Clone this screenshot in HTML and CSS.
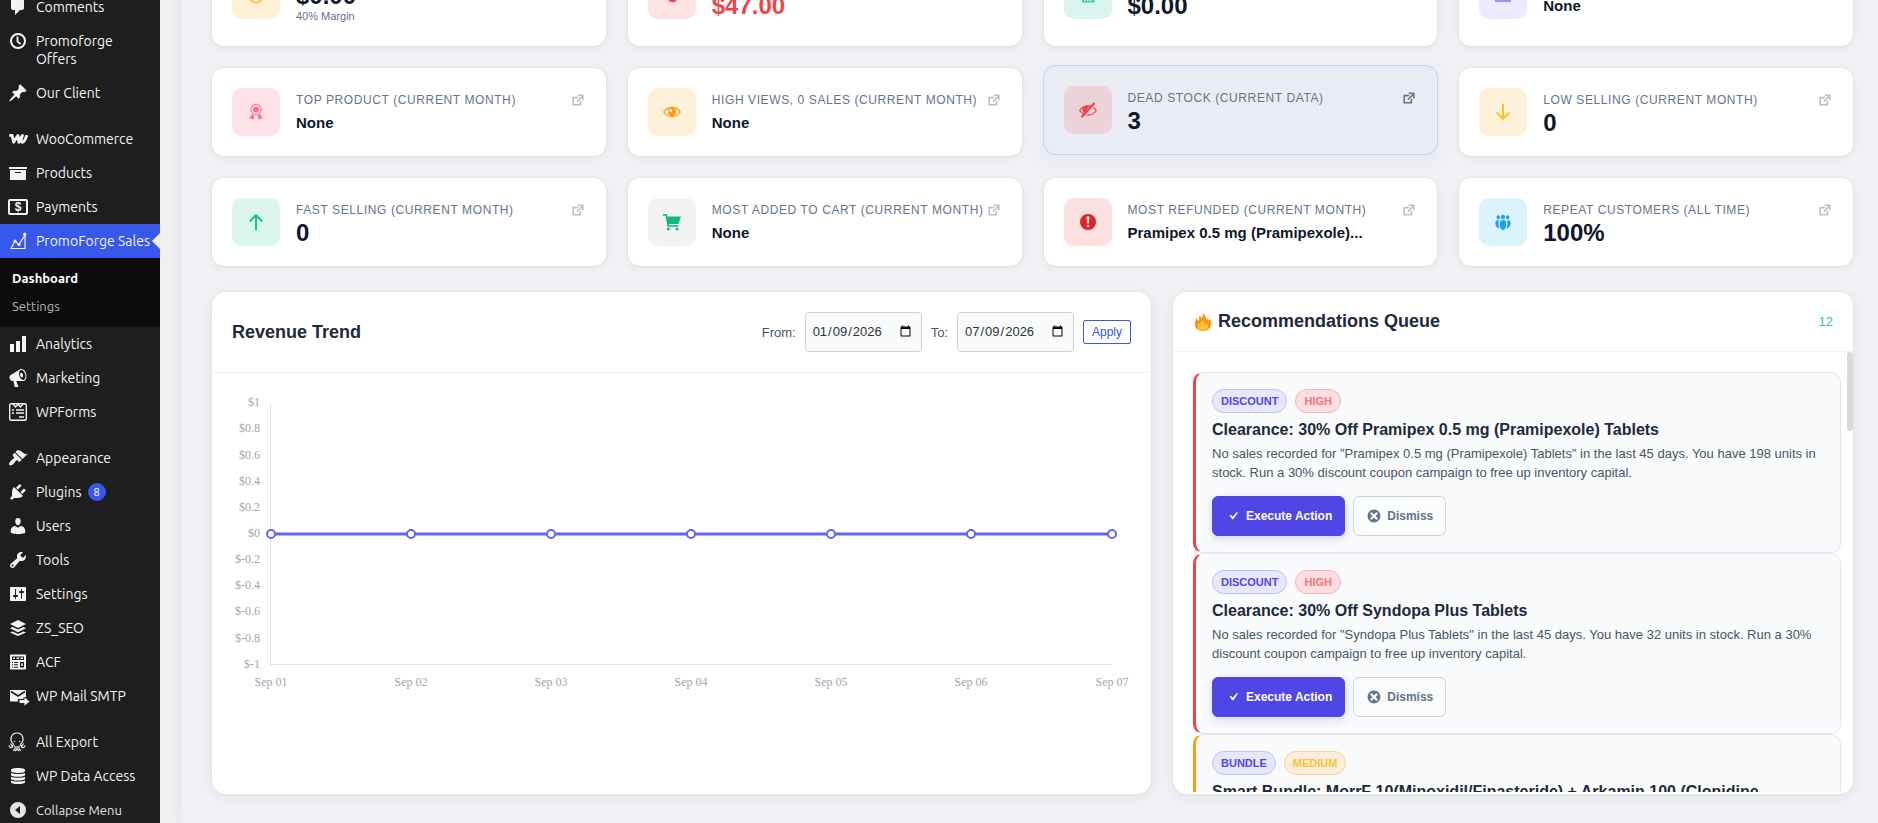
FILE: index.html
```html
<!DOCTYPE html>
<html lang="en">
<head>
  <meta charset="UTF-8" />
  <meta name="viewport" content="width=device-width, initial-scale=1" />
  <title>PromoForge Sales Dashboard</title>
  <link rel="stylesheet" href="styles.css">
</head>
<body>
  <!-- shared icons -->
  <svg class="sprite" aria-hidden="true">
    <symbol id="external" viewBox="0 0 20 20"><path d="M9 3h8v8l-2-1V6.92l-5.6 5.59-1.41-1.41L14.08 5H10zm3 12v-3l2-2v7H3V6h8L9 8H5v7h7z"/></symbol>
    <symbol id="check" viewBox="0 0 20 20"><path d="M14.83 4.89l1.34.94-5.81 8.38H9.02L5.78 9.67l1.34-1.25 2.57 2.4z"/></symbol>
    <symbol id="dismiss" viewBox="0 0 20 20"><path d="M10 2c4.42 0 8 3.58 8 8s-3.58 8-8 8-8-3.58-8-8 3.58-8 8-8zm5 11l-3-3 3-3-2-2-3 3-3-3-2 2 3 3-3 3 2 2 3-3 3 3z"/></symbol>
  </svg>

  <div class="layout">
    <nav class="sidebar" aria-label="Main menu">
      <ul class="menu">
        <li><a href="#"><svg viewBox="0 0 20 20"><path d="M5 2h9c1.1 0 2 .9 2 2v7c0 1.1-.9 2-2 2h-2l-5 5v-5H5c-1.1 0-2-.9-2-2V4c0-1.1.9-2 2-2z"/></svg><span>Comments</span></a></li>
        <li><a href="#"><svg viewBox="0 0 20 20"><circle cx="10" cy="10" r="7" fill="none" stroke="currentColor" stroke-width="2"/><path d="M9.5 5.5v5l3 2.5" fill="none" stroke="currentColor" stroke-width="1.8"/></svg><span>Promoforge Offers</span></a></li>
        <li><a href="#"><svg viewBox="0 0 20 20"><path d="M10.44 3.02l1.82-1.82 6.36 6.35-1.83 1.82c-1.05-.68-2.48-.57-3.41.36l-.75.75c-.92.93-1.04 2.35-.35 3.41l-1.83 1.82-2.41-2.41-2.8 2.79c-.42.42-3.38 2.71-3.8 2.29s1.86-3.39 2.28-3.81l2.79-2.79L4.1 9.36l1.83-1.82c1.05.69 2.48.57 3.4-.36l.75-.75c.93-.92 1.05-2.35.36-3.41z"/></svg><span>Our Client</span></a></li>
        <li class="gap"></li>
        <li><a href="#"><svg viewBox="0 0 20 20"><path d="M1.2 6.4h2.9l1.5 6.800 4.300-6.700 1 6.700c1-3.200 2-5.200 3.600-6.700-1.800 3.600-1.700 6.700-.2 6.700 1.800 0 3.200-3.200 4.500-7" fill="none" stroke="currentColor" stroke-width="2.900" stroke-linejoin="round"/></svg><span>WooCommerce</span></a></li>
        <li><a href="#"><svg viewBox="0 0 20 20"><path d="M19 4v2H1V4h18zM2 7h16v10H2V7zm11 3V9H7v1h6z"/></svg><span>Products</span></a></li>
        <li><a href="#"><svg viewBox="0 0 20 20"><rect x="1" y="3" width="18" height="14" rx="1" fill="none" stroke="currentColor" stroke-width="2"/><text x="10" y="14" class="glyph" text-anchor="middle">$</text></svg><span>Payments</span></a></li>
        <li class="current"><a href="#"><svg viewBox="0 0 20 20"><path d="M3 17.5L7 10l4 3.5L17 4v13.5z" fill="none" stroke="currentColor" stroke-width="1.2"/><circle cx="7" cy="10" r="1.5"/><circle cx="11" cy="13.5" r="1.5"/><circle cx="16.7" cy="3.2" r="1.6"/></svg><span>PromoForge Sales</span></a>
          <ul class="submenu">
            <li><a class="here" href="#">Dashboard</a></li>
            <li><a href="#">Settings</a></li>
          </ul>
        </li>
        <li><a href="#"><svg viewBox="0 0 20 20"><path d="M18 18V2h-4v16h4zm-6 0V7H8v11h4zM2 18h4v-8H2v8z"/></svg><span>Analytics</span></a></li>
        <li><a href="#"><svg viewBox="0 0 20 20"><path d="M18.15 5.94c.46 1.62.38 3.22-.02 4.48-.42 1.28-1.26 2.18-2.3 2.48-.16.06-.26.06-.4.06-.06.02-.12.02-.18.02-.06.02-.14.02-.22.02h-6.8l2.22 5.5c.02.14-.06.26-.14.34-.08.1-.24.16-.34.16H6.95c-.1 0-.26-.06-.34-.16-.08-.08-.16-.2-.14-.34l-1-5.5H4.25l-.02-.02c-.5.06-1.08-.18-1.54-.62s-.88-1.08-1.06-1.88c-.24-.8-.2-1.56-.02-2.2.18-.62.58-1.08 1.06-1.3l.02-.02 9-5.4c.1-.06.18-.1.24-.16.06-.04.14-.08.24-.12.16-.08.28-.12.5-.18 1.04-.3 2.24.1 3.22.98s1.84 2.24 2.26 3.86zm-2.58 5.98h-.02c.4-.1.74-.34 1.04-.7.58-.7.86-1.76.86-3.04 0-.64-.1-1.3-.28-1.98-.34-1.36-1.02-2.5-1.78-3.24s-1.68-1.1-2.46-.88c-.82.22-1.4.96-1.7 2-.32 1.04-.28 2.36.06 3.72.38 1.36 1 2.5 1.8 3.24.78.74 1.62 1.1 2.48.88zm-2.54-7.08c.22-.04.42-.02.62.04.38.16.76.48 1.02 1s.42 1.2.42 1.78c0 .3-.04.56-.12.8-.18.48-.44.84-.86.94-.34.1-.8-.06-1.14-.4s-.64-.86-.78-1.5c-.18-.62-.12-1.24.02-1.72s.48-.84.82-.94z"/></svg><span>Marketing</span></a></li>
        <li><a href="#"><svg viewBox="0 0 20 20" fill="none" stroke="currentColor"><rect x="1.7" y="1.7" width="16.6" height="16.6" rx="1.5" stroke-width="1.4"/><path d="M5 2l2.5 3L10 2.5 12.5 5 15 2M4 8h2m2 0h8M4 11h2m2 0h8M11 15h5" stroke-width="1.4"/></svg><span>WPForms</span></a></li>
        <li class="gap"></li>
        <li><a href="#"><svg viewBox="0 0 20 20"><path d="M14.48 11.06L7.41 3.99l1.5-1.5c.5-.56 2.3-.47 3.51.32 1.21.8 1.43 1.28 2.91 2.1 1.18.64 2.45 1.26 4.45.85zm-.71.71L6.7 4.7 4.93 6.47c-.39.39-.39 1.02 0 1.41l1.06 1.06c.39.39.39 1.03 0 1.42-.6.6-1.43 1.11-2.21 1.69-.35.26-.7.53-1.01.84C1.43 14.23.4 16.08 1.4 17.07c.99 1 2.84-.03 4.18-1.36.31-.31.58-.66.85-1.02.57-.78 1.08-1.61 1.69-2.21.39-.39 1.02-.39 1.41 0l1.06 1.06c.39.39 1.02.39 1.41 0z"/></svg><span>Appearance</span></a></li>
        <li><a href="#"><svg viewBox="0 0 20 20"><path d="M13.11 4.36L9.87 7.6 8 5.73l3.24-3.24c.35-.34 1.05-.2 1.56.32.52.51.66 1.21.31 1.55zm-8 1.77l.91-1.12 9.01 9.01-1.19.84c-.71.71-2.63 1.16-3.82 1.16H6.14L4.9 17.26c-.59.59-1.54.59-2.12 0-.59-.58-.59-1.53 0-2.12l1.24-1.24v-3.88c0-1.13.4-3.19 1.09-3.89zm7.26 3.97l3.24-3.24c.34-.35 1.04-.21 1.55.31.52.51.66 1.21.31 1.55l-3.24 3.25z"/></svg><span>Plugins</span><span class="count">8</span></a></li>
        <li><a href="#"><svg viewBox="0 0 20 20"><path d="M10 9.25c-2.27 0-2.73-3.44-2.73-3.44C7 4.02 7.82 2 9.97 2c2.16 0 2.98 2.02 2.71 3.81 0 0-.41 3.44-2.68 3.44zm0 2.57L12.72 10c2.39 0 4.52 2.33 4.52 4.53v2.49s-3.65 1.13-7.24 1.13c-3.65 0-7.24-1.13-7.24-1.13v-2.49c0-2.25 1.94-4.48 4.47-4.48z"/></svg><span>Users</span></a></li>
        <li><a href="#"><svg viewBox="0 0 20 20"><path d="M16.68 9.77c-1.34 1.34-3.3 1.67-4.95.99l-5.41 6.52c-.99.99-2.59.99-3.58 0s-.99-2.59 0-3.57l6.52-5.42c-.68-1.65-.35-3.61.99-4.95 1.28-1.28 3.12-1.62 4.72-1.06l-2.89 2.89 2.82 2.82 2.86-2.87c.53 1.58.18 3.39-1.08 4.65zM3.81 16.21c.4.39 1.04.39 1.43 0 .4-.4.4-1.04 0-1.43-.39-.4-1.03-.4-1.43 0-.39.39-.39 1.03 0 1.43z"/></svg><span>Tools</span></a></li>
        <li><a href="#"><svg viewBox="0 0 20 20"><path fill-rule="evenodd" d="M18 16V4c0-.55-.45-1-1-1H3c-.55 0-1 .45-1 1v12c0 .55.45 1 1 1h14c.55 0 1-.45 1-1zM8 11h1c.55 0 1 .45 1 1s-.45 1-1 1H8v1.5c0 .28-.22.5-.5.5s-.5-.22-.5-.5V13H6c-.55 0-1-.45-1-1s.45-1 1-1h1V5.5c0-.28.22-.5.5-.5s.5.22.5.5V11zm5-2h-1c-.55 0-1-.45-1-1s.45-1 1-1h1V5.5c0-.28.22-.5.5-.5s.5.22.5.5V7h1c.55 0 1 .45 1 1s-.45 1-1 1h-1v5.5c0 .28-.22.5-.5.5s-.5-.22-.5-.5V9z"/></svg><span>Settings</span></a></li>
        <li><a href="#"><svg viewBox="0 0 20 20"><path d="M10 2l8 4-8 4-8-4zM4.5 9L10 11.5 15.5 9l2.5 1.2-8 4-8-4zM4.5 13.500L10 16l5.5-2.500 2.500 1-8 3.500-8-3.500z"/></svg><span>ZS_SEO</span></a></li>
        <li><a href="#"><svg viewBox="0 0 20 20"><path fill-rule="evenodd" d="M3 2.5h14c.6 0 1 .4 1 1v13c0 .6-.4 1-1 1H3c-.6 0-1-.4-1-1v-13c0-.6.4-1 1-1zM4 4.500V8h12V4.500zm1 1h2V7H5zm3.500 0h2.700V7H8.500zm4 0H15V7h-2.500zM4 10v1h1v-1zm2 0v1h4v-1zm-2 2.300v1h1v-1zm2 0v1h4v-1zM4 14.700v1h1v-1zm2 0v1h4v-1zM12 10v5.500h4V10zm1.300 1.300h1.500v2.700h-1.500z"/></svg><span>ACF</span></a></li>
        <li><a href="#"><svg viewBox="0 0 22 20" class="wide"><path d="M3 4h14c.6 0 1 .4 1 1v6h-2.500v2H10v2.500H3c-.6 0-1-.4-1-1V5c0-.6.4-1 1-1z"/><path d="M3 5.500l7 4.500 7-4.500" fill="none" stroke="#1e1e1e" stroke-width="1.6"/><path d="M11.500 14h5v-2.800l5 4.300-5 4.300V17h-5z"/></svg><span>WP Mail SMTP</span></a></li>
        <li class="gap"></li>
        <li><a href="#"><svg viewBox="0 0 20 20" fill="none" stroke="currentColor" stroke-width="1.2"><path d="M5.500 12C3 10 2.600 7 3.300 5 4.300 2.300 6.500 1 9 1s4.800 1.300 5.700 4c.7 2 .3 5-2.200 7"/><path d="M5.500 12l-1 3c-1 1.500-3.500.5-3.500-1.500M4.500 15l-2-3.500M12.500 12l1 3c1 1.500 3.500.5 3.500-1.500M13.500 15l2-3.500M6.500 13.500c1.500 2 .5 4.500-1.500 5M11.500 13.500c-1.500 2-.5 4.500 1.500 5M9 14v3M7 19l2-2 2 2"/><path d="M6 9.500h1.200M11 9.500h1.200"/></svg><span>All Export</span></a></li>
        <li><a href="#"><svg viewBox="0 0 20 20"><path d="M3 4c0-1.2 3-2 7-2s7 .8 7 2v1c0 1.2-3 2-7 2s-7-.8-7-2zM3 7c2 1.300 12 1.300 14 0v2c0 1-3 1.800-7 1.800S3 10 3 9zM3 10.800c2 1.300 12 1.300 14 0v2c0 1-3 1.800-7 1.800s-7-.8-7-1.800zM3 14.600c2 1.300 12 1.300 14 0v1.600c0 1-3 1.800-7 1.800s-7-.8-7-1.800z"/></svg><span>WP Data Access</span></a></li>
        <li><button type="button" class="collapse"><svg viewBox="0 0 20 20"><path fill-rule="evenodd" d="M10 2a8 8 0 100 16 8 8 0 000-16zm2 12V6l-5 4z"/></svg><span>Collapse Menu</span></button></li>
      </ul>
    </nav>

    <main class="content">
      <section class="stats">
        <article class="stat">
          <div class="icon amber"><svg viewBox="0 0 20 20" fill="none" stroke="#ffb52e" stroke-width="1.5"><circle cx="10" cy="10" r="7.5"/><path d="M12.500 7.500c-3-2-5 0-2.500 2.500s0 4-2.500 2.500"/></svg></div>
          <div class="info">
            <div class="label">Net Profit (Current Month)</div>
            <div class="value">$0.00</div>
            <div class="note">40% Margin</div>
          </div>
        </article>
        <article class="stat">
          <div class="icon red"><svg viewBox="0 0 20 20"><path d="M2 4h16v10h-3c-1 4-5 4-8 2L6 12H2z"/></svg></div>
          <div class="info">
            <div class="label">Refunds (Current Month)</div>
            <div class="value loss">$47.00</div>
          </div>
        </article>
        <article class="stat">
          <div class="icon teal"><svg viewBox="0 0 20 20"><path fill-rule="evenodd" d="M4 3h12.500v14.500H4zM6 12v4h1.500v-4zm3 0v4h1.500v-4zm3 0v4h1.500v-4z"/></svg></div>
          <div class="info">
            <div class="label">Average Order (Current Month)</div>
            <div class="value">$0.00</div>
          </div>
        </article>
        <article class="stat">
          <div class="icon violet"><svg viewBox="0 0 20 20"><path d="M2 5h16v12H2z"/></svg></div>
          <div class="info">
            <div class="label">Top Category (Current Month)</div>
            <div class="value text">None</div>
          </div>
        </article>

        <article class="stat">
          <div class="icon rose"><svg viewBox="0 0 20 20"><circle cx="10" cy="7.5" r="3"/><circle cx="10" cy="7.5" r="5" fill="none" stroke="currentColor" stroke-width="1.3" stroke-dasharray="2 .6"/><path d="M6 12l2.500 1.700L7 18l-1.300-1.500L3 17zM14 12l-2.500 1.700L13 18l1.300-1.500L17 17z"/></svg></div>
          <div class="info">
            <div class="label"><span>Top Product (Current Month)</span><a href="#" aria-label="Open top product"><svg><use href="#external"/></svg></a></div>
            <div class="value text">None</div>
          </div>
        </article>
        <article class="stat">
          <div class="icon orange"><svg viewBox="0 0 20 20"><path d="M1.700 10c4-6 12.600-6 16.600 0-4 6-12.600 6-16.600 0z" fill="none" stroke="currentColor" stroke-width="1.3"/><path fill-rule="evenodd" d="M10 6a4 4 0 100 8 4 4 0 000-8zM8.800 7.200a1.500 1.500 0 110 3 1.500 1.500 0 010-3z"/></svg></div>
          <div class="info">
            <div class="label"><span>High Views, 0 Sales (Current Month)</span><a href="#" aria-label="Open high views"><svg><use href="#external"/></svg></a></div>
            <div class="value text">None</div>
          </div>
        </article>
        <article class="stat active">
          <div class="icon red"><svg viewBox="0 0 20 20"><path d="M1.700 10.500c4-6 12.600-6 16.600 0-4 6-12.600 6-16.600 0z" fill="none" stroke="currentColor" stroke-width="1.3"/><path d="M11 6.200a4.200 4.200 0 00-4.500 7.300z"/><path d="M17.500 4L5 18" stroke="#edd2da" stroke-width="1.5"/><path d="M16.500 3L3.500 17.300" stroke="currentColor" stroke-width="2.2"/></svg></div>
          <div class="info">
            <div class="label"><span>Dead Stock (Current Data)</span><a href="#" aria-label="Open dead stock"><svg><use href="#external"/></svg></a></div>
            <div class="value">3</div>
          </div>
        </article>
        <article class="stat">
          <div class="icon yellow"><svg viewBox="0 0 20 20" fill="none" stroke="currentColor" stroke-width="2"><path d="M10 2v15M3.700 10.500l6.300 6.300 6.300-6.300"/></svg></div>
          <div class="info">
            <div class="label"><span>Low Selling (Current Month)</span><a href="#" aria-label="Open low selling"><svg><use href="#external"/></svg></a></div>
            <div class="value">0</div>
          </div>
        </article>

        <article class="stat">
          <div class="icon green"><svg viewBox="0 0 20 20" fill="none" stroke="currentColor" stroke-width="2"><path d="M10 18V3M3.700 9.500L10 3.200l6.300 6.300"/></svg></div>
          <div class="info">
            <div class="label"><span>Fast Selling (Current Month)</span><a href="#" aria-label="Open fast selling"><svg><use href="#external"/></svg></a></div>
            <div class="value">0</div>
          </div>
        </article>
        <article class="stat">
          <div class="icon grey"><svg viewBox="0 0 20 20"><path d="M1 2h3.800l.6 2.500H19L16.500 12H6.800l.2 1.200h9.500v1.500H5.500L3.600 3.800H1z"/><circle cx="6.300" cy="17" r="1.5"/><circle cx="15" cy="17" r="1.5"/></svg></div>
          <div class="info">
            <div class="label"><span>Most Added To Cart (Current Month)</span><a href="#" aria-label="Open most added to cart"><svg><use href="#external"/></svg></a></div>
            <div class="value text">None</div>
          </div>
        </article>
        <article class="stat">
          <div class="icon crimson"><svg viewBox="0 0 20 20"><path fill-rule="evenodd" d="M10 2a8 8 0 100 16 8 8 0 000-16zM8.500 4.500h3l-.5 7H9zM10 12.700a1.400 1.400 0 110 2.800 1.400 1.400 0 010-2.800z"/></svg></div>
          <div class="info">
            <div class="label"><span>Most Refunded (Current Month)</span><a href="#" aria-label="Open most refunded"><svg><use href="#external"/></svg></a></div>
            <div class="value text">Pramipex 0.5 mg (Pramipexole)...</div>
          </div>
        </article>
        <article class="stat">
          <div class="icon sky"><svg viewBox="0 0 20 20"><circle cx="10" cy="5" r="2.2"/><ellipse cx="5.300" cy="5.300" rx="1.7" ry="2"/><ellipse cx="14.700" cy="5.300" rx="1.7" ry="2"/><path d="M10 8c2.500 0 3.200 1.600 3.200 4.500S12 18 10 18s-3.200-2.600-3.200-5.500S7.500 8 10 8zM6 8c-.8 2.500-.7 6 .5 8.500C3.500 16 2.300 13 2.300 11S4 8 6 8zM14 8c.8 2.500.7 6-.5 8.500 3-.5 4.200-3.500 4.200-5.500S16 8 14 8z"/></svg></div>
          <div class="info">
            <div class="label"><span>Repeat Customers (All Time)</span><a href="#" aria-label="Open repeat customers"><svg><use href="#external"/></svg></a></div>
            <div class="value">100%</div>
          </div>
        </article>
      </section>

      <div class="panels">
        <section class="panel">
          <header class="panel-head">
            <h2>Revenue Trend</h2>
            <form class="range">
              <label for="from">From:</label>
              <input type="date" id="from" value="2026-01-09">
              <label for="to">To:</label>
              <input type="date" id="to" value="2026-07-09">
              <button type="button">Apply</button>
            </form>
          </header>
          <svg class="chart" viewBox="0 0 939 340" role="img" aria-label="Revenue per day">
            <path class="axis" d="M58.500 31V291.500H900"/>
            <g class="ticks" text-anchor="end">
              <text x="48" y="33">$1</text>
              <text x="48" y="59">$0.8</text>
              <text x="48" y="86">$0.6</text>
              <text x="48" y="112">$0.4</text>
              <text x="48" y="138">$0.2</text>
              <text x="48" y="164">$0</text>
              <text x="48" y="190">$-0.2</text>
              <text x="48" y="216">$-0.4</text>
              <text x="48" y="242">$-0.6</text>
              <text x="48" y="269">$-0.8</text>
              <text x="48" y="295">$-1</text>
            </g>
            <g class="ticks" text-anchor="middle">
              <text x="59" y="313">Sep 01</text>
              <text x="199" y="313">Sep 02</text>
              <text x="339" y="313">Sep 03</text>
              <text x="479" y="313">Sep 04</text>
              <text x="619" y="313">Sep 05</text>
              <text x="759" y="313">Sep 06</text>
              <text x="900" y="313">Sep 07</text>
            </g>
            <path class="line" d="M59 161H900"/>
            <g class="dots">
              <circle cx="59" cy="161" r="4"/>
              <circle cx="199" cy="161" r="4"/>
              <circle cx="339" cy="161" r="4"/>
              <circle cx="479" cy="161" r="4"/>
              <circle cx="619" cy="161" r="4"/>
              <circle cx="759" cy="161" r="4"/>
              <circle cx="900" cy="161" r="4"/>
            </g>
          </svg>
        </section>

        <section class="panel queue">
          <header class="panel-head">
            <h2><svg class="fire" viewBox="0 0 20 20"><path fill="#f9931e" d="M10 20C5 20 1 17.500 1 12.500 1 9.500 2.500 8 2.800 5.500 4 6.500 4.500 8 4.700 9.500 6 7.500 5.500 5 6 3c1.500.8 2 2 2.300 3.500C9.500 4.500 9 2 11 0c-.3 2.500 3 4 3 8 .8-.6 1-1.500.8-2.700 1 .7 1.500 2 1.700 3.200.7-.7.800-1.700.7-2.500 1.300 2 2.300 4 2 6.500C18.700 17.500 15 20 10 20z"/><path fill="#fdc53c" d="M10 19.500c-4 0-6-2-6-4.800 0-1.500.7-2.500 1.500-3.200.3 1 .8 1.500 1.500 1.700 0-2 1.200-4 3.200-5.200 0 2 1 3 2 4.500.7-.3 1-1 1-1.800 1.500 1 2.500 2.500 2.300 4.300-.3 3-2.500 4.500-5.500 4.500z"/></svg>Recommendations Queue</h2>
            <span class="total">12</span>
          </header>
          <div class="queue-body">
            <div class="queue-list">
              <article class="rec high">
                <div class="tags"><span class="tag">DISCOUNT</span><span class="tag hot">HIGH</span></div>
                <h3>Clearance: 30% Off Pramipex 0.5 mg (Pramipexole) Tablets</h3>
                <p>No sales recorded for "Pramipex 0.5 mg (Pramipexole) Tablets" in the last 45 days. You have 198 units in stock. Run a 30% discount coupon campaign to free up inventory capital.</p>
                <div class="actions">
                  <button type="button" class="run"><svg><use href="#check"/></svg>Execute Action</button>
                  <button type="button" class="skip"><svg><use href="#dismiss"/></svg>Dismiss</button>
                </div>
              </article>
              <article class="rec high">
                <div class="tags"><span class="tag">DISCOUNT</span><span class="tag hot">HIGH</span></div>
                <h3>Clearance: 30% Off Syndopa Plus Tablets</h3>
                <p>No sales recorded for "Syndopa Plus Tablets" in the last 45 days. You have 32 units in stock. Run a 30% discount coupon campaign to free up inventory capital.</p>
                <div class="actions">
                  <button type="button" class="run"><svg><use href="#check"/></svg>Execute Action</button>
                  <button type="button" class="skip"><svg><use href="#dismiss"/></svg>Dismiss</button>
                </div>
              </article>
              <article class="rec medium">
                <div class="tags"><span class="tag">BUNDLE</span><span class="tag warm">MEDIUM</span></div>
                <h3>Smart Bundle: MorrF 10(Minoxidil/Finasteride) + Arkamin 100 (Clonidine</h3>
              </article>
            </div>
            <div class="scroll-thumb"></div>
          </div>
        </section>
      </div>
    </main>
  </div>
</body>
</html>
```
FILE: styles.css
```css
* {
  box-sizing: border-box;
}
body {
  margin: 0;
  height: 100vh;
  overflow: hidden;
  background: #f0f0f0;
  font-family: "Liberation Sans", Arial, sans-serif;
  color: #0f172a;
}
.sprite {
  display: none;
}
svg {
  fill: currentColor;
}
svg[fill="none"] {
  fill: none;
}
.layout {
  display: flex;
  height: 100vh;
  overflow: hidden;
}

/* sidebar */
.sidebar {
  width: 160px;
  flex: none;
  background: #1e1e1e;
  font-family: Ubuntu, "Noto Sans", sans-serif;
}
.menu {
  margin-top: -10px;
}
.menu, .submenu {
  padding: 0;
  list-style: none;
}
.menu a, .collapse {
  display: flex;
  align-items: flex-start;
  gap: 8px;
  padding: 8px 20px 8px 8px;
  color: #f3f3f3;
  font-size: 14px;
  line-height: 18px;
  text-decoration: none;
}
.menu svg {
  width: 20px;
  height: 20px;
  flex: none;
  margin: -1px 0;
}
.menu svg.wide {
  width: 22px;
  margin-right: -2px;
}
.glyph {
  font: bold 12px "Liberation Sans", sans-serif;
}
.gap {
  height: 12px;
}
.collapse {
  width: 100%;
  border: 0;
  background: none;
  font-family: inherit;
  font-size: 13px;
  text-align: left;
  color: #e4e4e4;
}
.count {
  width: 18px;
  height: 18px;
  margin-left: -2px;
  border-radius: 50%;
  background: #3858e9;
  color: white;
  font-size: 11px;
  text-align: center;
}
.current {
  position: relative;
}
.menu .current > a {
  padding-right: 0;
  background: #3858e9;
  white-space: nowrap;
}
.current > a::after {
  content: "";
  position: absolute;
  right: 0;
  top: 9px;
  border: 8px solid transparent;
  border-left: 0;
  border-right-color: #f0f0f0;
}
.submenu {
  padding: 6px 0 7px;
  background: #0c0c0c;
}
.submenu a {
  padding: 5px 12px;
  font-size: 13px;
  color: #b4b4b4;
}
.submenu a.here {
  color: white;
  font-weight: bold;
}

/* content */
.content {
  flex: 1;
  min-width: 0;
  margin: -56px 0 0 21px;
  padding: 0 25px 0 31px;
  background: #f0f1f5;
  box-shadow: 0 0 12px rgba(0, 0, 0, 0.08);
}
.stats {
  display: grid;
  grid-template-columns: repeat(4, minmax(0, 1fr));
  gap: 22px;
}
.stat {
  display: flex;
  align-items: center;
  gap: 16px;
  padding: 20px;
  border-radius: 12px;
  background: white;
  box-shadow: 0 0 0 1px rgba(0, 0, 0, 0.03), 0 2px 8px rgba(0, 0, 0, 0.06);
}
.stat.active {
  transform: translateY(-2px);
  background: #eaecf5;
  box-shadow: 0 0 0 1px #cccdfb, 0 8px 20px rgba(99, 102, 241, 0.08);
}
.icon {
  display: flex;
  align-items: center;
  justify-content: center;
  width: 48px;
  height: 48px;
  flex: none;
  border-radius: 10px;
}
.icon svg {
  width: 20px;
  height: 20px;
}
.amber { background: #fff0d6; }
.red { background: #fee2e2; color: #ef4444; }
.teal { background: #dbf5ee; color: #3ccfb0; }
.violet { background: #ede9fe; color: #a78bfa; }
.rose { background: #ffe2e7; color: #fb6f86; }
.orange { background: #fff0d9; color: #f99c18; }
.yellow { background: #fff0d9; color: #fdc02a; }
.green { background: #daf5ea; color: #1cbf84; }
.grey { background: #f2f2f2; color: #10b981; }
.crimson { background: #fce0e0; color: #e02424; }
.sky { background: #daf3fd; color: #18a4ea; }
.active .icon {
  background: #edd2da;
}
.info {
  flex: 1;
  min-width: 0;
}
.label {
  display: flex;
  align-items: center;
  justify-content: space-between;
  height: 18px;
  margin-bottom: 4px;
  color: #64748b;
  font-size: 12px;
  line-height: 18px;
  letter-spacing: 0.05em;
  text-transform: uppercase;
  white-space: nowrap;
}
.label a {
  display: flex;
  color: #b9bec5;
}
.label svg {
  width: 16px;
  height: 16px;
}
.active .label a {
  color: #64748b;
}
.value {
  font-size: 24px;
  font-weight: bold;
  line-height: 20px;
}
.value.text {
  font-size: 15px;
}
.value.loss {
  color: #ef4444;
}
.note {
  color: #64748b;
  font-size: 11px;
  line-height: 20px;
}

/* panels */
.panels {
  display: grid;
  grid-template-columns: minmax(0, 58fr) minmax(0, 42fr);
  gap: 22px;
  margin-top: 26px;
}
.panel {
  overflow: hidden;
  border-radius: 14px;
  background: white;
  box-shadow: 0 0 0 1px rgba(0, 0, 0, 0.02), 0 2px 12px rgba(0, 0, 0, 0.07);
}
.panel-head {
  display: flex;
  align-items: center;
  justify-content: space-between;
  padding: 20px;
  border-bottom: 1px solid #f0f1f3;
}
.panel-head h2 {
  display: flex;
  align-items: center;
  gap: 5px;
  margin: 0;
  color: #1e293b;
  font-size: 18px;
  line-height: 19px;
}
.fire {
  width: 20px;
  height: 18px;
}
.total {
  color: #3cc48a;
  font-size: 13px;
  line-height: 16px;
}
.range {
  display: flex;
  align-items: center;
  gap: 9px;
  color: #475569;
  font-size: 13px;
}
.range input {
  width: 117px;
  height: 40px;
  padding: 0 7px 2px 6px;
  border: 1px solid #cbd5d9;
  border-radius: 4px;
  background: #f8fafc;
  color: #2c3338;
  font-family: inherit;
  font-size: 13px;
}
.range button {
  height: 24px;
  padding: 0 8px;
  border: 1px solid #3858e9;
  border-radius: 2px;
  background: white;
  color: #3858e9;
  font-family: inherit;
  font-size: 12px;
}
.chart {
  display: block;
  width: 100%;
}
.axis {
  fill: none;
  stroke: #dcdfe3;
}
.ticks {
  fill: #a0a5b1;
  font-family: "Liberation Serif", serif;
  font-size: 12px;
}
.line {
  stroke: #6366f1;
  stroke-width: 3;
}
.dots {
  fill: white;
  stroke: #6366f1;
  stroke-width: 2;
}

/* recommendations */
.queue-body {
  position: relative;
  padding-bottom: 2px;
}
.queue-list {
  height: 440px;
  padding: 20px 12px 0 20px;
  overflow-y: auto;
  scrollbar-width: none;
}
.scroll-thumb {
  position: absolute;
  top: 0;
  right: 0;
  width: 6px;
  height: 79px;
  border-radius: 3px;
  background: #d9dadc;
}
.rec {
  padding: 16px;
  border: 1px solid #e2e6ee;
  border-left: 3px solid #ef4444;
  border-radius: 10px;
  background: #f9fafc;
}
.rec.medium {
  border-left-color: #f99c18;
}
.tags, .actions {
  display: flex;
  gap: 8px;
}
.tag {
  height: 24px;
  padding: 0 8px;
  border: 1px solid #c3bffa;
  border-radius: 12px;
  background: #e6e7f9;
  color: #4f46e5;
  font-size: 11px;
  font-weight: bold;
  line-height: 22px;
}
.tag.hot {
  border-color: #fbb0b3;
  background: #f9dfe1;
  color: #fb7077;
}
.tag.warm {
  border-color: #fbd38b;
  background: #faeedb;
  color: #fbbf35;
}
.rec h3 {
  margin: 6px 0 3px;
  color: #1e293b;
  font-size: 16px;
  line-height: 22px;
}
.rec p {
  margin: 0 0 14px;
  color: #475569;
  font-size: 13px;
  line-height: 19px;
}
.actions button {
  display: flex;
  align-items: center;
  gap: 5px;
  height: 40px;
  padding: 0 12px;
  border: 1px solid #4f46e5;
  border-radius: 6px;
  font-family: inherit;
  font-size: 12px;
  font-weight: bold;
}
.actions svg {
  width: 16px;
  height: 16px;
}
.run {
  background: #4f46e5;
  color: white;
  box-shadow: 0 3px 8px rgba(79, 70, 229, 0.2);
}
.actions .skip {
  border-color: #cbd5d9;
  background: #f9fbfc;
  color: #64748b;
}
```
